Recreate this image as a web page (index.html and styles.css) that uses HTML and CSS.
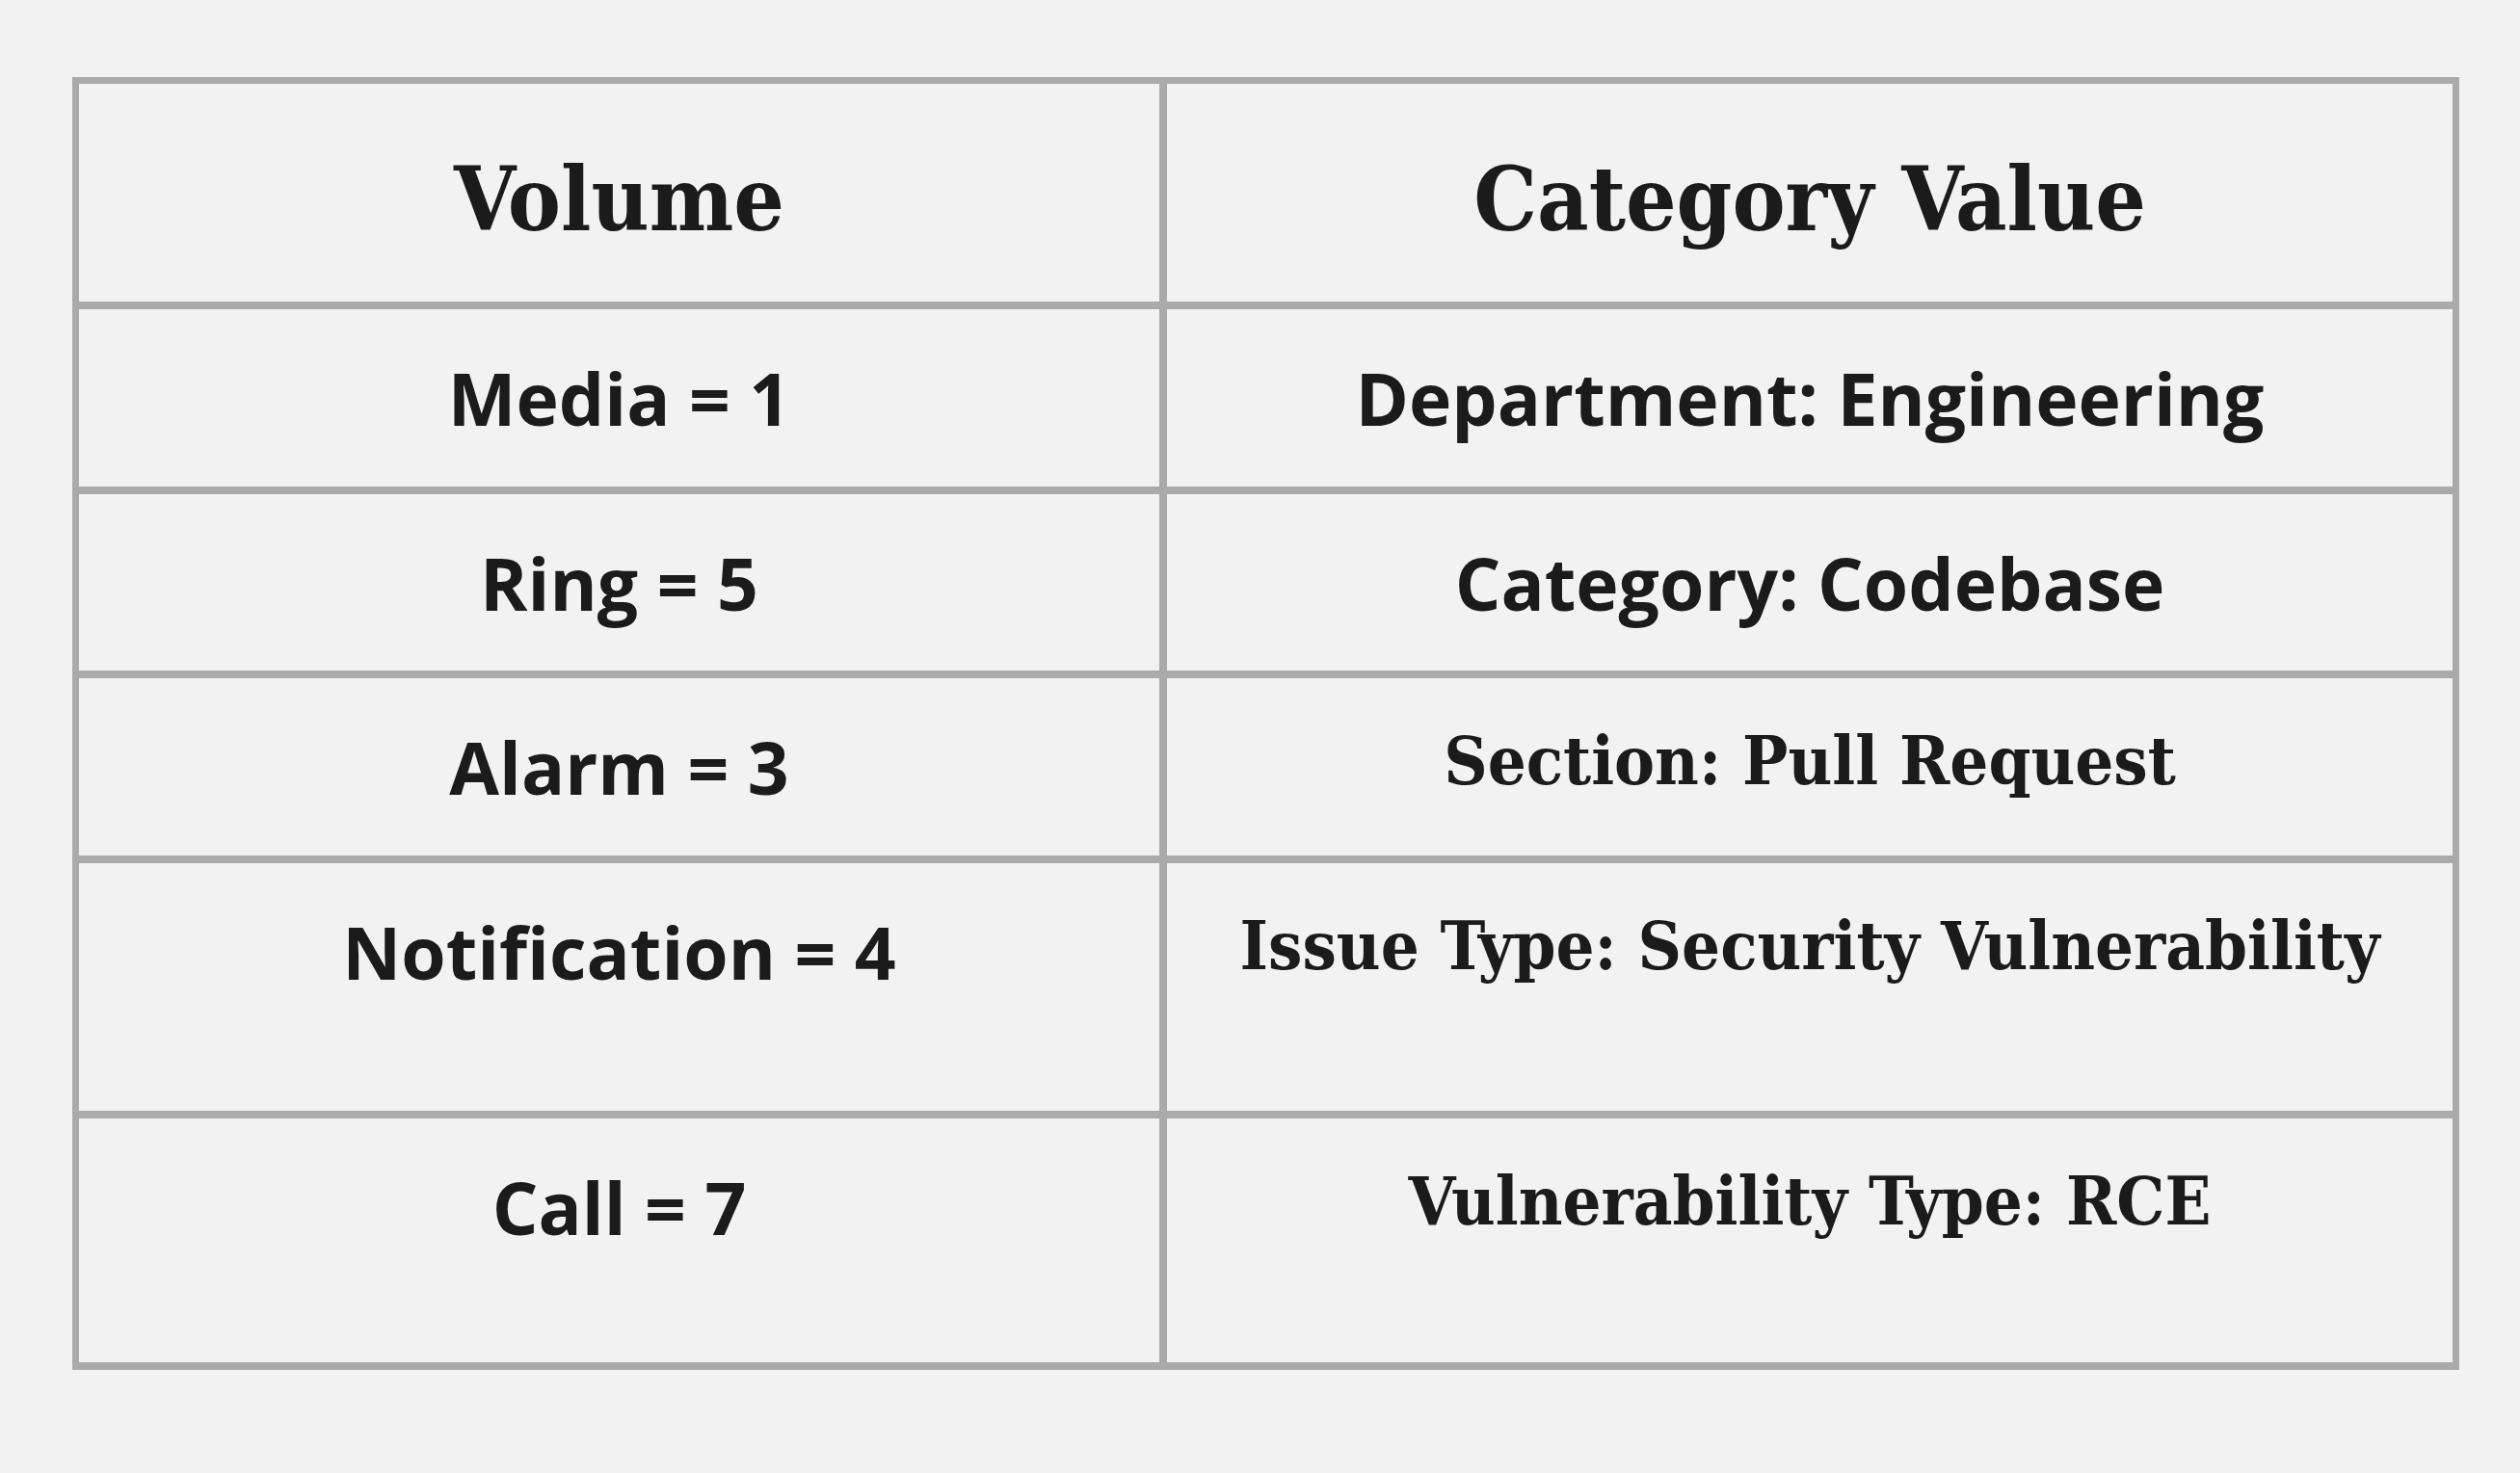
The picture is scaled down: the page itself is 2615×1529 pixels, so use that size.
FILE: index.html
```html
<!DOCTYPE html>
<html lang="en">
<head>
<meta charset="utf-8">
<title>Table</title>
<link rel="stylesheet" href="styles.css">
</head>
<body>
<div class="page">
  <div class="grid">
    <div class="cell head">Volume</div>
    <div class="cell head">Category Value</div>
    <div class="cell sans">Media = 1</div>
    <div class="cell sans">Department: Engineering</div>
    <div class="cell sans">Ring = 5</div>
    <div class="cell sans">Category: Codebase</div>
    <div class="cell sans">Alarm = 3</div>
    <div class="cell slab">Section: Pull Request</div>
    <div class="cell sans">Notification = 4</div>
    <div class="cell slab">Issue Type: Security Vulnerability</div>
    <div class="cell sans">Call = 7</div>
    <div class="cell slab">Vulnerability Type: RCE</div>
  </div>
</div>
</body>
</html>
```
FILE: styles.css
```css
html, body {
  margin: 0;
  padding: 0;
  background: #f2f2f2;
}
.page {
  padding: 80px 0 0 75px;
}
.grid {
  display: grid;
  width: max-content;
  grid-template-columns: 1121px 1334px;
  grid-template-rows: 226px 184px 183px 184px 257px 253px;
  gap: 8px;
  padding: 7px 7px 8px 7px;
  background: #aaaaaa;
}
.cell {
  background: #f2f2f2;
  color: #1b1b1b;
  text-align: center;
  white-space: nowrap;
  line-height: 1;
  font-weight: 700;
}
.head {
  font-family: "DejaVu Serif Condensed", "DejaVu Serif", serif;
  font-stretch: condensed;
  font-size: 92px;
  padding-top: 74px;
}
.sans {
  font-family: "Open Sans", "Noto Sans", sans-serif;
  font-size: 75px;
  padding-top: 55px;
}
.slab {
  font-family: "DejaVu Serif Condensed", "DejaVu Serif", serif;
  font-stretch: condensed;
  font-size: 70px;
  padding-top: 51px;
}
```
